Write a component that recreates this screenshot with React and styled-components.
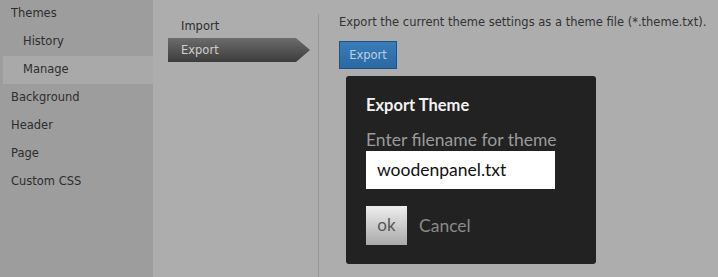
import styled, { createGlobalStyle } from "styled-components"

const Global = createGlobalStyle`
  html, body {
    margin: 0;
    padding: 0;
    background: #adadad;
  }
  body {
    font-family: "DejaVu Sans", "Liberation Sans", sans-serif;
  }
`

const Page = styled.div`
  display: flex;
  width: 718px;
  height: 277px;
  overflow: hidden;
  background: #adadad;
`

const Sidebar = styled.div`
  width: 153px;
  flex-shrink: 0;
  background: #9d9d9d;
`

const SideItem = styled.div`
  height: 28px;
  line-height: 27px;
  font-size: 11.5px;
  color: #2e2e2e;
  padding-left: ${props => (props.sub ? "20px" : "11px")};
  margin-left: ${props => (props.sub ? "3px" : "0")};
  background: ${props => (props.active ? "#a9a9a9" : "transparent")};
`

const SubNav = styled.div`
  width: 165px;
  flex-shrink: 0;
  padding-top: 14px;
  padding-left: 15px;
  box-sizing: border-box;
`

const SubItem = styled.div`
  height: 24px;
  line-height: 24px;
  font-size: 11.5px;
  padding-left: 13px;
  color: ${props => (props.active ? "#cfcfcf" : "#2e2e2e")};
  width: ${props => (props.active ? "142px" : "auto")};
  box-sizing: border-box;
  background: ${props =>
    props.active ? "linear-gradient(#6c6c6c, #3c3c3c)" : "transparent"};
  clip-path: ${props =>
    props.active
      ? "polygon(0 0, 128px 0, 100% 50%, 128px 100%, 0 100%)"
      : "none"};
`

const Divider = styled.div`
  width: 1px;
  flex-shrink: 0;
  margin-top: 14px;
  background: #979797;
`

const Content = styled.div`
  flex: 1;
  padding: 14px 0 0 20px;
`

const Intro = styled.p`
  margin: 0;
  font-size: 11.5px;
  line-height: 16px;
  color: #333;
`

const BlueButton = styled.button`
  display: block;
  margin-top: 11px;
  width: 58px;
  height: 28px;
  padding: 0;
  border: 1px solid #1f5284;
  background: linear-gradient(#3a7db9, #2968a3);
  color: #bcd0e4;
  font-family: "DejaVu Sans", sans-serif;
  font-size: 11.5px;
`

const Dialog = styled.div`
  margin: 7px 0 0 7px;
  width: 250px;
  height: 188px;
  box-sizing: border-box;
  background: #222;
  border-radius: 3px;
  padding: 20px 20px 0 20px;
  font-family: Lato, "Open Sans", sans-serif;
`

const Title = styled.div`
  font-size: 16.5px;
  font-weight: bold;
  color: #f2f2f2;
  line-height: 18px;
`

const Label = styled.div`
  margin-top: 16px;
  font-size: 17.5px;
  line-height: 20px;
  color: #9a9a9a;
`

const Input = styled.div`
  margin-top: 1px;
  width: 189px;
  height: 38px;
  box-sizing: border-box;
  background: #fff;
  padding-left: 11px;
  font-size: 17.5px;
  line-height: 38px;
  color: #111;
`

const Actions = styled.div`
  display: flex;
  align-items: center;
  gap: 12px;
  margin-top: 17px;
`

const OkButton = styled.div`
  width: 41px;
  height: 39px;
  background: linear-gradient(#eeeeee, #a9a9a9);
  color: #555;
  font-size: 17px;
  line-height: 38px;
  text-align: center;
`

const Cancel = styled.span`
  font-size: 17.5px;
  color: #8a8a8a;
`

function App() {
  return (
    <Page>
      <Global />
      <Sidebar>
        <SideItem>Themes</SideItem>
        <SideItem sub>History</SideItem>
        <SideItem sub active>Manage</SideItem>
        <SideItem>Background</SideItem>
        <SideItem>Header</SideItem>
        <SideItem>Page</SideItem>
        <SideItem>Custom CSS</SideItem>
      </Sidebar>
      <SubNav>
        <SubItem>Import</SubItem>
        <SubItem active>Export</SubItem>
      </SubNav>
      <Divider />
      <Content>
        <Intro>Export the current theme settings as a theme file (*.theme.txt).</Intro>
        <BlueButton>Export</BlueButton>
        <Dialog>
          <Title>Export Theme</Title>
          <Label>Enter filename for theme</Label>
          <Input>woodenpanel.txt</Input>
          <Actions>
            <OkButton>ok</OkButton>
            <Cancel>Cancel</Cancel>
          </Actions>
        </Dialog>
      </Content>
    </Page>
  )
}

export default App;
